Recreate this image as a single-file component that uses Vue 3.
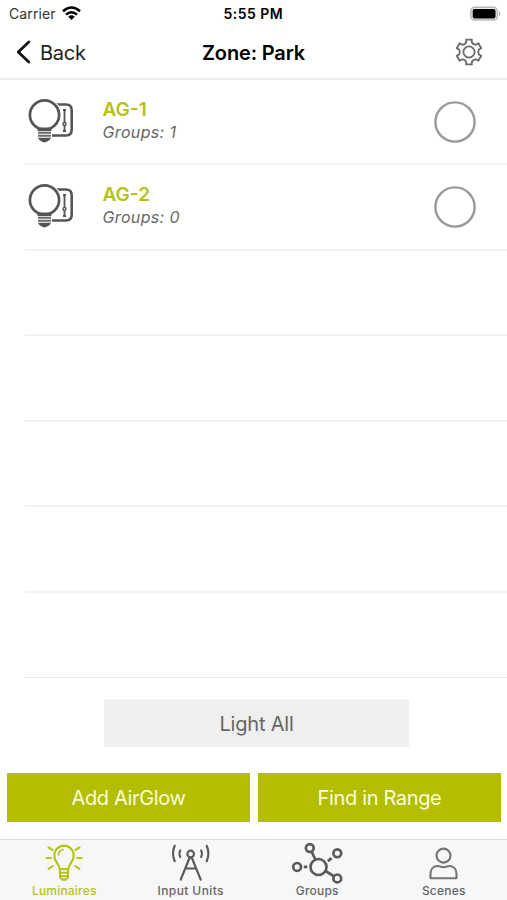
<script setup>
const luminaires = [
  { name: 'AG-1', groups: 1 },
  { name: 'AG-2', groups: 0 },
]
const emptyRows = 5

// Outline of a six-toothed gear centred on the origin.
const polar = (r, deg) => {
  const a = ((deg - 90) * Math.PI) / 180
  return `${(r * Math.cos(a)).toFixed(2)} ${(r * Math.sin(a)).toFixed(2)}`
}
const gearPath =
  [0, 60, 120, 180, 240, 300]
    .map((a, i) =>
      `${i ? 'L' : 'M'}${polar(12.8, a - 13)} L${polar(12.8, a + 13)} L${polar(10.2, a + 16)} ` +
      `Q${polar(8.4, a + 30)} ${polar(10.2, a + 44)}`)
    .join(' ') + ' Z'
</script>

<template>
  <main class="screen">
    <header class="status">
      <div class="carrier">
        <span>Carrier</span>
        <svg width="19" height="14" viewBox="0 0 19 14" fill="none" stroke="#000" stroke-width="2.5">
          <path d="M1 5.3 Q9.5 -2.3 18 5.3" />
          <path d="M4 8.6 Q9.5 3.8 15 8.6" />
          <path d="M6.2 10.7 Q9.5 7.8 12.8 10.7 L9.5 14Z" fill="#000" stroke="none" />
        </svg>
      </div>
      <span class="time">5:55 PM</span>
      <svg class="battery" width="32" height="16" viewBox="0 0 32 16">
        <rect x="1.8" y="1.3" width="26.6" height="12.8" rx="3.8" fill="#e8e8e8" stroke="#b9b9b9" stroke-width="1.5" />
        <rect x="3.7" y="3" width="22.8" height="9.4" rx="1.8" fill="#000" />
        <path d="M30 5.5 Q32.8 7.8 30 10.1Z" fill="#aaa" />
      </svg>
    </header>

    <nav class="nav">
      <div class="back">
        <svg width="16" height="24" viewBox="0 0 16 24" fill="none" stroke="#111" stroke-width="2.8" stroke-linecap="round" stroke-linejoin="round">
          <path d="M13.8 2 L3.3 12 L13.8 22" />
        </svg>
        <span>Back</span>
      </div>
      <h1>Zone: Park</h1>
      <svg class="gear" width="30" height="30" viewBox="-15 -15 30 30" fill="none" stroke="#6a6a6a" stroke-width="1.8" stroke-linejoin="round">
        <path :d="gearPath" />
        <circle r="5.6" />
      </svg>
    </nav>

    <ul class="list">
      <li v-for="item in luminaires" :key="item.name" class="row">
        <svg class="lamp" width="48" height="48" viewBox="0 0 48 48" fill="none" stroke="#555">
          <path d="M29 7.5 H39 Q44.7 7.5 44.7 13.2 V32.8 Q44.7 38.5 39 38.5 H25" stroke-width="2.6" />
          <path d="M37.5 13 V34" stroke-width="1.8" />
          <path d="M36 13 H39 M36 34 H39" stroke-width="2.2" />
          <circle cx="37.5" cy="27" r="1.5" fill="#fff" stroke-width="1.4" />
          <circle cx="17.5" cy="18" r="17" fill="#fff" stroke="none" />
          <circle cx="17.5" cy="18" r="14.6" fill="#fff" stroke-width="2.7" />
          <path d="M10 30.4 H25 L24.2 34 H10.8Z" fill="#555" stroke="none" />
          <path d="M11 35.8 H24 M11 38.8 H24" stroke="#6a6a6a" stroke-width="2" />
          <path d="M11 40.8 H24 Q22.5 44.6 17.5 45.4 Q12.5 44.6 11 40.8Z" fill="#555" stroke="none" />
        </svg>
        <div class="labels">
          <strong>{{ item.name }}</strong>
          <em>Groups: {{ item.groups }}</em>
        </div>
        <svg class="radio" width="42" height="42" viewBox="0 0 42 42">
          <circle cx="21" cy="21" r="19.6" fill="#fff" stroke="#999" stroke-width="2.4" />
        </svg>
      </li>
      <li v-for="n in emptyRows" :key="n" class="row"></li>
    </ul>

    <section class="actions">
      <button class="light">Light All</button>
      <div class="pair">
        <button class="add">Add AirGlow</button>
        <button class="find">Find in Range</button>
      </div>
    </section>

    <footer class="tabs">
      <div class="tab active">
        <svg width="54" height="40" viewBox="0 0 54 40" fill="none" stroke="#b5c414" stroke-width="2.1" stroke-linecap="round" stroke-linejoin="round">
          <path d="M22.7 27 C22.3 22 17.3 20 17.3 13.4 C17.3 8 21.6 3.6 27 3.6 S36.7 8 36.7 13.4 C36.7 20 31.7 22 31.3 27Z" />
          <path d="M21.5 13 Q21.7 8.5 26 7.5" stroke-width="1.7" />
          <path d="M23 27 V35 L25 37.6 H29 L31 35 V27 M23 30.7 H31 M23 34.3 H31" />
          <path d="M9.5 16 H13.8 M40.3 16 H44.6 M11.5 5.3 L15.6 8.2 M42.5 5.3 L38.4 8.2 M11.5 27 L15.6 24 M42.5 27 L38.4 24" />
        </svg>
        <span>Luminaires</span>
      </div>
      <div class="tab wide">
        <svg width="54" height="40" viewBox="0 0 54 40" fill="none" stroke="#5a5a5a" stroke-width="2.2" stroke-linecap="round">
          <circle cx="26.7" cy="12" r="3.3" />
          <path d="M25.7 15.5 L16.7 37.7 M27.7 15.5 L36.7 37.7 M21.4 26.5 H32" />
          <path d="M16.3 8.3 Q14.6 11.5 16.3 15 M37.1 8.3 Q38.8 11.5 37.1 15" stroke-width="2" />
          <path d="M10.7 3.8 Q7.3 11.5 10.7 19.2 M42.7 3.8 Q46.1 11.5 42.7 19.2" />
        </svg>
        <span>Input Units</span>
      </div>
      <div class="tab">
        <svg width="54" height="40" viewBox="0 0 54 40" fill="none" stroke="#5a5a5a" stroke-width="2.7">
          <circle cx="28.5" cy="25" r="8" />
          <circle cx="19.8" cy="6" r="3.9" />
          <circle cx="47.3" cy="11.2" r="3.9" />
          <circle cx="7.1" cy="24.9" r="3.9" />
          <circle cx="47.3" cy="36.4" r="3.9" />
          <path d="M21.5 9.7 L25.4 17.5 M35.5 29 L43.8 34.2" />
          <path d="M13.8 24.9 H17.3 M37.8 19.1 L41.6 16.1" stroke-width="2.8" />
        </svg>
        <span>Groups</span>
      </div>
      <div class="tab">
        <svg width="54" height="40" viewBox="0 0 54 40" fill="none" stroke="#747474" stroke-width="2.1" stroke-linejoin="round">
          <circle cx="26.5" cy="13.6" r="7" />
          <path d="M13.5 36.3 V32 C13.5 26.5 17 24 20.5 24 C22.5 24 24 25.2 26.5 25.2 S30.5 24 32.5 24 C36 24 39.5 26.5 39.5 32 V36.3Z" />
        </svg>
        <span>Scenes</span>
      </div>
    </footer>
  </main>
</template>

<style>
body { margin: 0; background: #fff; }
</style>

<style scoped>
.screen {
  width: 507px;
  height: 900px;
  display: flex;
  flex-direction: column;
  overflow: hidden;
  background: #fff;
  font-family: Inter, "Liberation Sans", sans-serif;
  color: #000;
}
.screen * { box-sizing: border-box; }
svg { display: block; flex: none; }
.status {
  height: 27px;
  flex: none;
  display: grid;
  grid-template-columns: 1fr 60px 1fr;
  align-items: center;
  padding: 0 6px 0 9px;
  font-size: 14px;
}
.carrier { display: flex; align-items: center; gap: 6px; color: #333; }
.carrier span { letter-spacing: 0.1px; }
.carrier svg { margin-bottom: 2px; }
.time { margin-left: -1.5px; font-weight: 600; letter-spacing: 0.45px; white-space: nowrap; }
.battery { justify-self: end; }
.nav {
  height: 53px;
  flex: none;
  display: grid;
  grid-template-columns: 1fr auto 1fr;
  align-items: center;
  padding: 0 15px 1px;
  border-bottom: 2px solid #eee;
}
.back { display: flex; align-items: center; gap: 9px; font-size: 20px; letter-spacing: -0.25px; color: #222; }
.back span, .nav h1 { padding-top: 1px; }
.nav h1 { margin: 0; font-size: 20px; font-weight: 600; letter-spacing: -0.15px; }
.gear { justify-self: end; margin-right: 8px; }
.list { list-style: none; margin: 0; padding: 0 0 0 25px; flex: none; }
.row {
  height: 85.5px;
  display: flex;
  align-items: center;
  border-bottom: 2px solid #f2f2f2;
  padding-right: 31px;
}
.row:first-child { height: 85px; }
.row:last-child { border-bottom-width: 1px; border-color: #e9e9e9; }
.lamp { margin: 0 0 1px 2px; }
.labels { margin: 0 0 2px 27.5px; flex: 1; display: flex; flex-direction: column; }
.labels strong { font-size: 19px; line-height: 23px; font-weight: 600; color: #b4c116; }
.labels em { font-size: 16px; line-height: 22px; letter-spacing: 0.35px; color: #666; }
.actions {
  flex: 1;
  display: flex;
  flex-direction: column;
  align-items: center;
  padding: 21px 6px 0 7px;
  gap: 25.5px;
}
button { border: 0; padding: 0; font: 20px Inter, "Liberation Sans", sans-serif; }
.light { width: 305px; height: 48px; padding-top: 1px; margin-left: 5px; background: #efefef; color: #666; letter-spacing: -0.2px; }
.pair { width: 100%; display: grid; grid-template-columns: 1fr 1fr; gap: 8px; }
.pair button { height: 49px; padding-top: 1px; background: #b4be00; color: #fbfbdc; letter-spacing: -0.35px; }
.tabs {
  height: 61px;
  flex: none;
  display: grid;
  grid-template-columns: repeat(4, 1fr);
  padding-left: 1px;
  background: #f7f7f7;
  border-top: 1px solid #dcdcdc;
}
.tab {
  display: flex;
  flex-direction: column;
  align-items: center;
  gap: 2px;
  padding-top: 2px;
  color: #666;
  font-size: 12px;
  line-height: 14px;
  font-weight: 500;
  letter-spacing: 0.2px;
}
.tab svg { overflow: visible; }
.wide { letter-spacing: 0.4px; }
.active { color: #b5c414; }
</style>
